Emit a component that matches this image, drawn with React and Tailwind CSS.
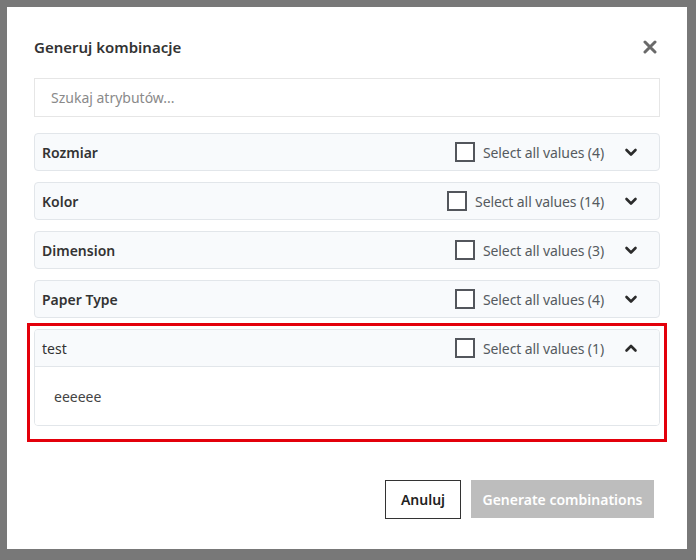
import React, { useState } from 'react'

const attributes = [
  { name: 'Rozmiar', count: 4 },
  { name: 'Kolor', count: 14 },
  { name: 'Dimension', count: 3 },
  { name: 'Paper Type', count: 4 },
]

const Chevron = ({ up = false }) => (
  <svg width="14" height="14" viewBox="0 0 14 14" className="text-[#2b2b2b]">
    <polyline
      points={up ? '2.5,9.5 7,5 11.5,9.5' : '2.5,5 7,9.5 11.5,5'}
      fill="none"
      stroke="currentColor"
      strokeWidth="2.6"
      strokeLinecap="round"
      strokeLinejoin="round"
    />
  </svg>
)

const AttributeHeader = ({ name, count, open, bold = true }) => (
  <div className="flex h-[36px] items-center pl-[7px] pr-[21px]">
    <span className={`flex-1 text-[14px] text-[#333] ${bold ? 'font-semibold' : 'font-normal'}`}>{name}</span>
    <label className="flex items-center gap-[8px]">
      <span className="h-[20px] w-[20px] border-2 border-[#53565c] bg-white" />
      <span className="text-[14px] tracking-[-0.1px] text-[#555a60]">Select all values ({count})</span>
    </label>
    <span className="ml-[20px] flex w-[14px] justify-center">
      <Chevron up={open} />
    </span>
  </div>
)

export default function App() {
  const [query, setQuery] = useState('')

  return (
    <div
      className="h-[560px] w-[696px] overflow-hidden bg-[#787878] pt-[7px] pl-[7px]"
      style={{ fontFamily: '"Noto Sans", "Open Sans", sans-serif' }}
    >
      <div className="flex h-[542px] w-[680px] flex-col bg-white px-[27px]">
        {/* header */}
        <div className="flex h-[71px] items-center justify-between pt-[9px]">
          <h2 className="text-[15px] font-semibold text-[#333]">Generuj kombinacje</h2>
          <button className="mr-[3px] text-[#6a6a6a]" aria-label="Zamknij">
            <svg width="14" height="14" viewBox="0 0 14 14">
              <path d="M2 2 L12 12 M12 2 L2 12" stroke="currentColor" strokeWidth="3" strokeLinecap="round" />
            </svg>
          </button>
        </div>

        {/* search */}
        <input
          value={query}
          onChange={(e) => setQuery(e.target.value)}
          placeholder="Szukaj atrybutów..."
          className="h-[39px] w-full border border-[#e6e6e6] px-[16px] text-[14px] text-[#333] outline-none placeholder:text-[#8a8a8a]"
        />

        {/* attributes */}
        <div className="mt-[16px] flex flex-col gap-[11px]">
          {attributes.map((a) => (
            <div key={a.name} className="rounded-[4px] border border-[#e2e6ea] bg-[#f8fafc]">
              <AttributeHeader name={a.name} count={a.count} open={false} />
            </div>
          ))}

          <div className="-mx-[7px] -mt-[6px] border-[3px] border-[#e3000b] px-[4px] pt-[3px] pb-[13px]">
            <div className="overflow-hidden rounded-[4px] border border-[#e2e6ea]">
              <div className="border-b border-[#e2e6ea] bg-[#f8fafc]">
                <AttributeHeader name="test" count={1} open bold={false} />
              </div>
              <div className="flex h-[58px] items-center bg-white pl-[19px]">
                <span className="text-[14px] text-[#444]">eeeeee</span>
              </div>
            </div>
          </div>
        </div>

        {/* footer */}
        <div className="mt-[38px] flex justify-end gap-[10px] pr-[6px]">
          <button className="h-[39px] w-[76px] border border-[#333] bg-white text-[14px] font-semibold text-[#222]">
            Anuluj
          </button>
          <button disabled className="h-[38px] w-[183px] bg-[#bdbdbd] text-[14px] font-semibold text-white">
            Generate combinations
          </button>
        </div>
      </div>
    </div>
  )
}
